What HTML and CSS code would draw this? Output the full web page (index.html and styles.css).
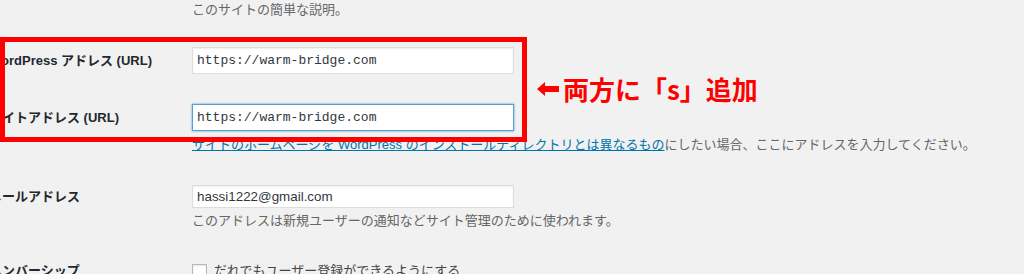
FILE: index.html
```html
<!DOCTYPE html>
<html lang="ja">
<head>
<meta charset="utf-8">
<title>一般設定</title>
<link rel="stylesheet" href="styles.css">
</head>
<body>
<div class="page">
  <div class="form">
    <div class="row row-tagline">
      <div class="th"></div>
      <div class="td"><p class="desc">このサイトの簡単な説明。</p></div>
    </div>
    <div class="row row-home">
      <div class="th">WordPress アドレス (URL)</div>
      <div class="td"><input class="field code" type="text" value="https://warm-bridge.com"></div>
    </div>
    <div class="row row-site">
      <div class="th">サイトアドレス (URL)</div>
      <div class="td">
        <input class="field code focused" type="text" value="https://warm-bridge.com">
        <p class="desc desc-site"><a href="#">サイトのホームページを WordPress のインストールディレクトリとは異なるもの</a>にしたい場合、ここにアドレスを入力してください。</p>
      </div>
    </div>
    <div class="row row-email">
      <div class="th">メールアドレス</div>
      <div class="td">
        <input class="field email" type="text" value="hassi1222@gmail.com">
        <p class="desc desc-email">このアドレスは新規ユーザーの通知などサイト管理のために使われます。</p>
      </div>
    </div>
    <div class="row row-member">
      <div class="th">メンバーシップ</div>
      <div class="td check-line"><span class="checkbox"></span><span class="check-label">だれでもユーザー登録ができるようにする</span></div>
    </div>
  </div>
  <div class="callout-box"></div>
  <div class="callout-text">
    <svg class="arrow" width="22" height="14" viewBox="0 0 22 14"><polygon points="0,7 8,0 8,4 22,4 22,10 8,10 8,14" fill="#ff0000"/></svg>
    <span>両方に「s」追加</span>
  </div>
</div>
</body>
</html>
```

FILE: styles.css
```css
html, body {
  margin: 0;
  padding: 0;
}
body {
  background: #f1f1f1;
  font-family: "Liberation Sans", "Noto Sans CJK JP", sans-serif;
  font-size: 13px;
  color: #444;
  height: 274px;
  overflow: hidden;
}
.page {
  position: relative;
  height: 274px;
}
.form {
  margin-left: -11px;
  padding-top: 1px;
}
.row {
  display: flex;
}
.th {
  flex: none;
  width: 203px;
  font-size: 13px;
  font-weight: bold;
  color: #23282d;
  white-space: nowrap;
}
.td {
  flex: 1;
}
.desc {
  margin: 0;
  line-height: 18px;
  color: #666;
  white-space: nowrap;
}
.desc a {
  color: #0073aa;
  text-decoration: underline;
}
.field {
  display: block;
  margin: 0;
  width: 322px;
  box-sizing: border-box;
  border: 1px solid #ddd;
  background: #fff;
  padding: 0 4px;
  color: #32373c;
  box-shadow: inset 0 1px 2px rgba(0, 0, 0, 0.07);
  outline: none;
}
.field.code {
  height: 27px;
  font-family: "Liberation Mono", monospace;
  font-size: 13px;
}
.field.focused {
  border-color: #5b9dd9;
  box-shadow: 0 0 2px rgba(30, 140, 190, 0.8);
}
.field.email {
  height: 23px;
  font-family: "Liberation Sans", sans-serif;
  font-size: 13.4px;
}
.row-home {
  margin-top: 28px;
}
.row-home .th,
.row-site .th {
  line-height: 27px;
}
.row-site {
  margin-top: 30px;
}
.desc-site {
  margin-top: 5px;
}
.row-email {
  margin-top: 31px;
}
.row-email .th {
  line-height: 23px;
}
.desc-email {
  margin-top: 4px;
}
.row-member {
  margin-top: 33px;
}
.row-member .th {
  line-height: 16px;
}
.check-line {
  display: flex;
  align-items: center;
  line-height: 16px;
  color: #444;
}
.checkbox {
  flex: none;
  width: 15px;
  height: 15px;
  box-sizing: border-box;
  border: 1px solid #b4b9be;
  background: #fff;
  box-shadow: inset 0 1px 2px rgba(0, 0, 0, 0.1);
}
.check-label {
  margin-left: 7px;
}
.callout-box {
  position: absolute;
  left: 0;
  top: 37px;
  width: 527px;
  height: 105px;
  box-sizing: border-box;
  border: 5px solid #ff0000;
}
.callout-text {
  position: absolute;
  left: 537px;
  top: 74px;
  height: 30px;
  display: flex;
  align-items: center;
  gap: 4px;
  color: #ff0000;
  font-family: "Noto Sans CJK JP", sans-serif;
  font-weight: bold;
  font-size: 26px;
  line-height: 30px;
  white-space: nowrap;
}
.arrow {
  display: block;
  flex: none;
}
```
